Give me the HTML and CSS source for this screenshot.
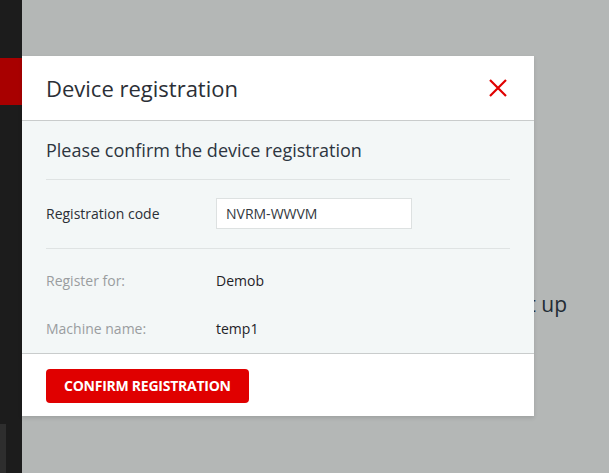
FILE: index.html
```html
<!DOCTYPE html>
<html lang="en">
<head>
<meta charset="utf-8">
<title>Device registration</title>
<link rel="stylesheet" href="styles.css">
</head>
<body>
<div class="app">
  <aside class="sidebar">
    <div class="sidebar-active"></div>
    <div class="sidebar-spacer"></div>
    <div class="sidebar-bottom"></div>
  </aside>
  <main class="main">
    <p class="bg-text">Let's set up</p>
  </main>
</div>

<div class="modal" role="dialog" aria-labelledby="modal-title">
  <header class="modal-header">
    <h1 id="modal-title" class="modal-title">Device registration</h1>
    <button class="close-btn" aria-label="Close">
      <svg width="18" height="18" viewBox="0 0 18 18"><path d="M1 1L17 17M17 1L1 17" stroke="#e00000" stroke-width="2.2" fill="none"/></svg>
    </button>
  </header>
  <section class="modal-body">
    <h2 class="modal-subtitle">Please confirm the device registration</h2>
    <div class="code-row">
      <label class="field-label" for="code">Registration code</label>
      <input id="code" class="code-input" type="text" value="NVRM-WWVM">
    </div>
    <div class="info-list">
      <div class="info-row">
        <span class="info-label">Register for:</span>
        <span class="info-value">Demob</span>
      </div>
      <div class="info-row">
        <span class="info-label">Machine name:</span>
        <span class="info-value">temp1</span>
      </div>
    </div>
  </section>
  <footer class="modal-footer">
    <button class="confirm-btn">CONFIRM REGISTRATION</button>
  </footer>
</div>
</body>
</html>
```

FILE: styles.css
```css
* { box-sizing: border-box; }

html, body {
  margin: 0;
  padding: 0;
  height: 100%;
}

body {
  font-family: "Open Sans", "Noto Sans", sans-serif;
  color: #2b3038;
  overflow: hidden;
}

.app {
  display: flex;
  height: 473px;
}

.sidebar {
  width: 22px;
  flex: none;
  background: #1c1c1c;
  display: flex;
  flex-direction: column;
  padding-top: 58px;
}

.sidebar-active {
  height: 47px;
  background: #a80000;
}

.sidebar-spacer {
  flex: 1;
}

.sidebar-bottom {
  width: 6px;
  height: 49px;
  background: #2e2e2e;
}

.main {
  flex: 1;
  background: #b4b7b6;
  display: flex;
  justify-content: flex-end;
  align-items: flex-start;
  padding: 290px 42px 0 0;
}

.bg-text {
  margin: 0;
  font-size: 21px;
  line-height: 28px;
  color: #222b35;
  white-space: nowrap;
}

.modal {
  position: absolute;
  left: 22px;
  top: 56px;
  width: 512px;
  background: #fff;
  box-shadow: 0 2px 4px rgba(0, 0, 0, 0.12);
}

.modal-header {
  height: 65px;
  display: flex;
  align-items: center;
  justify-content: space-between;
  padding: 0 27px 0 24px;
  border-bottom: 1px solid #c9cccc;
}

.modal-title {
  margin: 0;
  font-size: 22px;
  font-weight: 400;
  line-height: 30px;
  color: #2b2f36;
}

.close-btn {
  border: 0;
  background: none;
  padding: 0;
  width: 18px;
  height: 18px;
  display: flex;
  cursor: pointer;
}

.modal-body {
  background: #f3f7f7;
  padding: 17px 24px 0 24px;
  border-bottom: 1px solid #c9cccc;
}

.modal-subtitle {
  margin: 0;
  font-size: 18px;
  font-weight: 400;
  line-height: 24px;
  color: #2d3540;
  padding-bottom: 17px;
  border-bottom: 1px solid #dfe3e3;
}

.code-row {
  display: flex;
  align-items: center;
  padding: 18px 0 19px;
  border-bottom: 1px solid #dfe3e3;
}

.field-label {
  width: 170px;
  flex: none;
  font-size: 14px;
  line-height: 20px;
  color: #2b2f36;
}

.code-input {
  width: 196px;
  height: 31px;
  border: 1px solid #dde1e1;
  background: #fff;
  padding: 0 9px;
  font-family: "Open Sans", "Noto Sans", sans-serif;
  font-size: 14px;
  color: #333840;
  outline: none;
}

.info-list {
  padding-top: 8px;
}

.info-row {
  display: flex;
  padding: 14px 0;
  font-size: 14px;
  line-height: 20px;
}

.info-label {
  width: 170px;
  flex: none;
  color: #9a9d9f;
}

.info-value {
  color: #1f2328;
}

.modal-footer {
  padding: 15px 24px 13px;
}

.confirm-btn {
  height: 34px;
  border: 0;
  border-radius: 4px;
  background: #e00000;
  color: #fff;
  font-family: "Open Sans", "Noto Sans", sans-serif;
  font-weight: 700;
  font-size: 14px;
  letter-spacing: -0.25px;
  line-height: 34px;
  padding: 0 18px;
  cursor: pointer;
}
```
